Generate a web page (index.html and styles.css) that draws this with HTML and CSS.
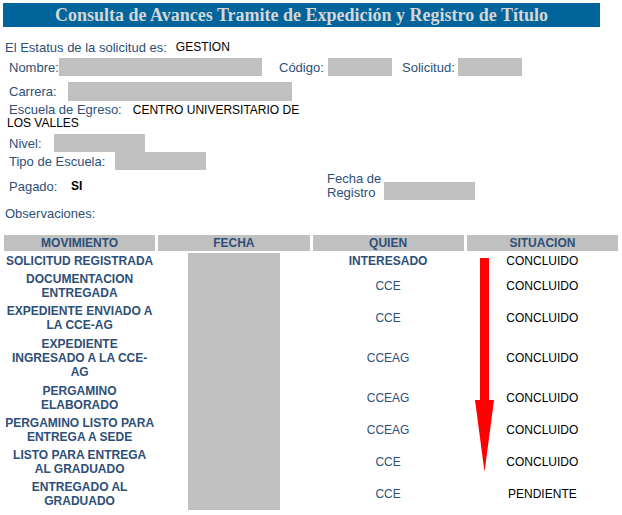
FILE: index.html
```html
<!DOCTYPE html>
<html lang="es">
<head>
<meta charset="utf-8">
<title>Consulta de Avances</title>
<link rel="stylesheet" href="styles.css">
</head>
<body>
<div class="page">
  <h1 class="title">Consulta de Avances Tramite de Expedición y Registro de Título</h1>

  <div class="info">
    <div class="row r-status"><span class="lbl">El Estatus de la solicitud es:</span><span class="val sp">GESTION</span></div>

    <div class="row r-nombre">
      <span class="lbl w-nombre">Nombre:</span><span class="box b-nombre"></span>
      <span class="lbl w-codigo g-codigo">Código:</span><span class="box b-codigo"></span>
      <span class="lbl w-solicitud g-solicitud">Solicitud:</span><span class="box b-codigo"></span>
    </div>

    <div class="row r-carrera">
      <span class="lbl w-carrera">Carrera:</span><span class="box b-carrera"></span>
    </div>

    <div class="r-escuela"><span class="lbl">Escuela de Egreso:</span><span class="val sp2">CENTRO UNIVERSITARIO DE LOS VALLES</span></div>

    <div class="row r-nivel">
      <span class="lbl w-nivel">Nivel:</span><span class="box b-short"></span>
    </div>

    <div class="row r-tipo">
      <span class="lbl w-tipo">Tipo de Escuela:</span><span class="box b-short"></span>
    </div>

    <div class="row r-pagado">
      <div class="pag-group"><span class="lbl w-pagado">Pagado:</span><span class="val bold">SI</span></div>
      <span class="lbl w-fecha two">Fecha de<br>Registro</span><span class="box b-short fecha-box"></span>
    </div>

    <div class="row r-obs"><span class="lbl">Observaciones:</span></div>
  </div>

  <table class="mov">
    <colgroup><col><col><col><col></colgroup>
    <thead>
      <tr><th>MOVIMIENTO</th><th>FECHA</th><th>QUIEN</th><th>SITUACION</th></tr>
    </thead>
    <tbody>
      <tr><td class="m">SOLICITUD REGISTRADA</td><td></td><td class="q bold">INTERESADO</td><td class="s">CONCLUIDO</td></tr>
      <tr><td class="m">DOCUMENTACION ENTREGADA</td><td></td><td class="q">CCE</td><td class="s">CONCLUIDO</td></tr>
      <tr><td class="m">EXPEDIENTE ENVIADO A LA CCE-AG</td><td></td><td class="q">CCE</td><td class="s">CONCLUIDO</td></tr>
      <tr class="tall"><td class="m">EXPEDIENTE INGRESADO A LA CCE-AG</td><td></td><td class="q">CCEAG</td><td class="s">CONCLUIDO</td></tr>
      <tr><td class="m">PERGAMINO ELABORADO</td><td></td><td class="q">CCEAG</td><td class="s">CONCLUIDO</td></tr>
      <tr><td class="m">PERGAMINO LISTO PARA ENTREGA A SEDE</td><td></td><td class="q">CCEAG</td><td class="s">CONCLUIDO</td></tr>
      <tr><td class="m">LISTO PARA ENTREGA AL GRADUADO</td><td></td><td class="q">CCE</td><td class="s">CONCLUIDO</td></tr>
      <tr><td class="m">ENTREGADO AL GRADUADO</td><td></td><td class="q">CCE</td><td class="s">PENDIENTE</td></tr>
    </tbody>
  </table>

  <div class="redact-fecha"></div>
  <svg class="arrow" width="22" height="216" viewBox="0 0 22 216">
    <rect x="6" y="1" width="9" height="143" fill="#ff0000"/>
    <polygon points="1,143 20,143 10.5,215" fill="#ff0000"/>
  </svg>
</div>
</body>
</html>
```
FILE: styles.css
```css
html, body {
  margin: 0;
  padding: 0;
  background: #ffffff;
}
body {
  font-family: "Liberation Sans", Arial, sans-serif;
  font-size: 12px;
  color: #000;
}
.page {
  position: relative;
  width: 622px;
  height: 515px;
  overflow: hidden;
}
.title {
  margin: 3px 0 0 3px;
  width: 597px;
  height: 24px;
  background: #00659b;
  color: #d6d6d6;
  font-family: "Liberation Serif", "Times New Roman", serif;
  font-weight: bold;
  font-size: 18px;
  line-height: 24px;
  text-align: center;
}
.info {
  display: flex;
  flex-direction: column;
}
.row {
  display: flex;
  align-items: center;
  padding-left: 9px;
}
.lbl {
  color: #2d4f78;
  font-size: 13px;
  flex: none;
}
.val { color: #000; font-size: 12px; }
.bold { font-weight: bold; }
.sp { margin-left: 9px; }
.sp2 { margin-left: 11px; }
.box {
  display: inline-block;
  background: #c0c0c0;
  flex: none;
}
.r-status { margin-top: 13px; height: 14px; padding-left: 5px; }
.r-nombre { margin-top: 4px; height: 18px; }
.r-nombre .box { height: 18px; }
.w-nombre { width: 50px; }
.b-nombre { width: 203px; }
.g-codigo { margin-left: 17px; }
.w-codigo { width: 49px; }
.b-codigo { width: 64px; }
.g-solicitud { margin-left: 10px; }
.w-solicitud { width: 56px; }
.r-carrera { margin-top: 6px; height: 19px; }
.w-carrera { width: 59px; }
.b-carrera { width: 224px; height: 19px; }
.r-escuela {
  margin-top: 2px;
  width: 310px;
  padding-left: 7px;
  line-height: 13px;
}
.r-escuela .lbl { padding-left: 2px; }
.r-nivel { margin-top: 4px; height: 18px; }
.w-nivel { width: 45px; }
.b-short { width: 91px; height: 18px; }
.r-tipo { height: 18px; }
.w-tipo { width: 106px; }
.r-pagado { margin-top: 2px; height: 28px; }
.pag-group { width: 318px; display: flex; align-items: center; }
.w-pagado { width: 62px; }
.w-fecha { width: 57px; line-height: 14px; }
.fecha-box { margin-top: 9px; }
.r-obs { margin-top: 6px; height: 14px; padding-left: 5px; }

.mov {
  margin: 13px 0 0 1px;
  width: 620px;
  table-layout: fixed;
  border-collapse: separate;
  border-spacing: 3px 2px;
  font-size: 12px;
  line-height: 14px;
}
.mov th {
  background: #c0c0c0;
  color: #2d4f78;
  font-weight: bold;
  height: 16px;
  padding: 0;
  line-height: 16px;
  text-align: center;
}
.mov td {
  padding: 1px 0;
  text-align: center;
  vertical-align: middle;
}
.mov tr.tall td { height: 44px; }
.mov td.m {
  color: #2d4f78;
  font-weight: bold;
}
.mov td.q { color: #2d4f78; }
.mov td.s { color: #000; }

.redact-fecha {
  position: absolute;
  left: 188px;
  top: 253px;
  width: 92px;
  height: 257px;
  background: #c0c0c0;
}
.arrow {
  position: absolute;
  left: 474px;
  top: 257px;
}
```
